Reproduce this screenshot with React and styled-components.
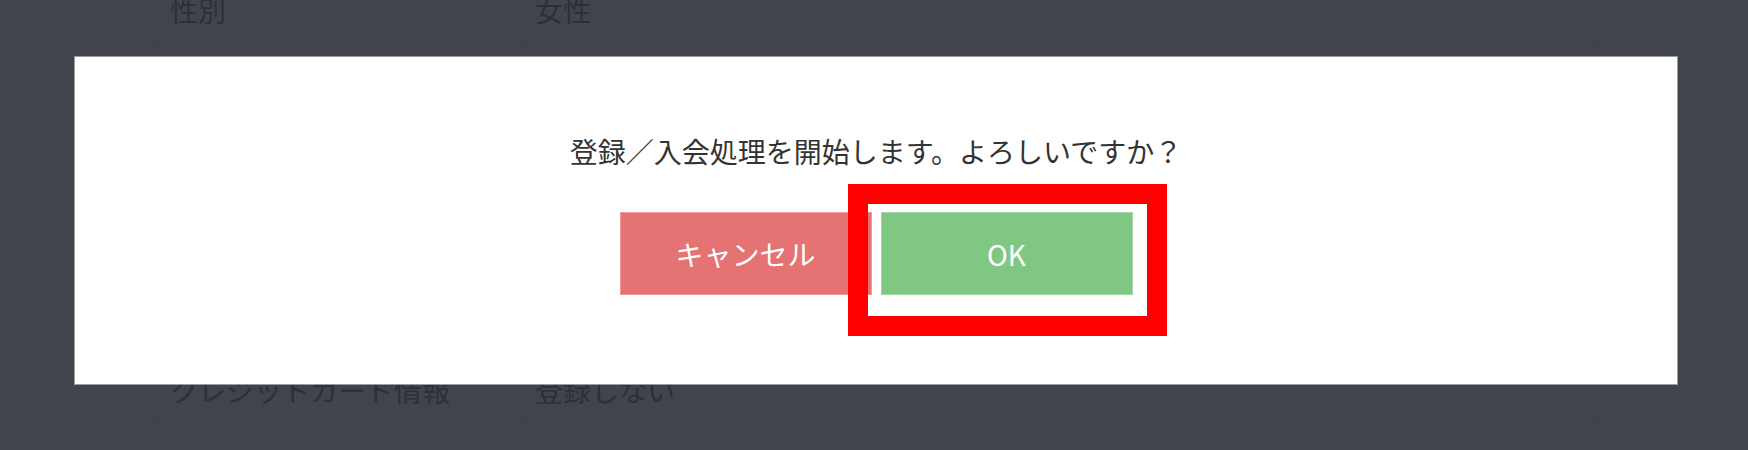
import React from "react";
import styled, { createGlobalStyle } from "styled-components";

const GlobalStyle = createGlobalStyle`
  html, body {
    margin: 0;
    padding: 0;
    background: #ffffff;
    overflow: hidden;
  }
  body {
    font-family: "Noto Sans CJK JP", "Noto Sans", sans-serif;
    color: #333333;
  }
`;

const Page = styled.div`
  width: 1748px;
  height: 450px;
  overflow: hidden;
  background: #ffffff;
`;

const Table = styled.div`
  margin: -21px 0 0 155px;
  width: 1442px;
  display: grid;
  grid-template-columns: 365px 1fr;
  border-left: 1px solid #d0d0d0;
  border-right: 1px solid #d0d0d0;
`;

const Cell = styled.div`
  height: 63.3px;
  box-sizing: border-box;
  display: flex;
  align-items: center;
  padding-left: 14px;
  border-bottom: 1px solid #d0d0d0;
  border-right: ${(p) => (p.$head ? "1px solid #d0d0d0" : "none")};
  font-size: 28px;
  color: #333333;
`;

const Overlay = styled.div`
  position: fixed;
  inset: 0;
  background: rgba(44, 47, 58, 0.9);
`;

const Modal = styled.div`
  position: fixed;
  top: 56px;
  left: 74px;
  width: 1604px;
  height: 329px;
  box-sizing: border-box;
  background: #ffffff;
  border: 1px solid #9c9c9c;
  display: flex;
  flex-direction: column;
  align-items: center;
  padding-top: 76px;
`;

const Message = styled.p`
  margin: 0;
  font-size: 28px;
  line-height: 36px;
  color: #333333;
`;

const Buttons = styled.div`
  display: flex;
  gap: 9px;
  margin-top: 43px;
`;

const Button = styled.div`
  position: relative;
  width: 252px;
  height: 83px;
  box-sizing: border-box;
  display: flex;
  align-items: center;
  justify-content: center;
  font-size: 28px;
  color: #ffffff;
  background: ${(p) => (p.$ok ? "#81c784" : "#e57373")};
  border: 1px solid ${(p) => (p.$ok ? "#a3d6a5" : "#ee9a9a")};
`;

const Highlight = styled.div`
  position: absolute;
  top: -29px;
  left: -34px;
  right: -35px;
  bottom: -42px;
  border: 20px solid #ff0000;
  pointer-events: none;
`;

const rows = [
  ["性別", "女性"],
  ["生年月日", "1990年1月1日"],
  ["電話番号", "090-0000-0000"],
  ["メールアドレス", "sample@example.com"],
  ["住所", "東京都"],
  ["会員種別", "一般会員"],
  ["クレジットカード情報", "登録しない"],
];

export default function App() {
  return (
    <Page>
      <GlobalStyle />
      <Table>
        {rows.map(([k, v]) => (
          <React.Fragment key={k}>
            <Cell $head>{k}</Cell>
            <Cell>{v}</Cell>
          </React.Fragment>
        ))}
      </Table>
      <Overlay />
      <Modal>
        <Message>登録／入会処理を開始します。よろしいですか？</Message>
        <Buttons>
          <Button>キャンセル</Button>
          <Button $ok>
            OK
            <Highlight />
          </Button>
        </Buttons>
      </Modal>
    </Page>
  );
}
